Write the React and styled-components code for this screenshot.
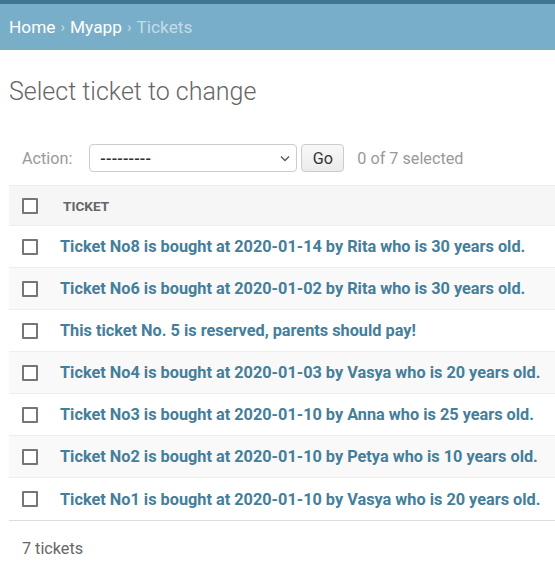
import React from "react";
import styled, { createGlobalStyle } from "styled-components";

const Global = createGlobalStyle`
  html, body { margin: 0; padding: 0; background: #fff; }
  body { font-family: Roboto, "Liberation Sans", Arial, sans-serif; color: #333; overflow: hidden; }
  * { box-sizing: border-box; }
`;

const TopStrip = styled.div`
  height: 4px;
  background: #417690;
`;

const Breadcrumbs = styled.div`
  height: 46px;
  background: #79aec8;
  padding: 0 9px;
  display: flex;
  align-items: center;
  font-size: 17.3px;
  color: #c4dce8;
`;

const Crumb = styled.a`
  color: #fff;
  text-decoration: none;
`;

const Sep = styled.span`
  color: #c4dce8;
  margin: 0 5px;
  font-size: 15px;
`;

const Content = styled.div`
  padding: 28px 0 0 9px;
`;

const Title = styled.h1`
  margin: 0 0 38px;
  font-size: 25px;
  font-weight: 300;
  color: #666;
  line-height: 28px;
`;

const Actions = styled.div`
  display: flex;
  align-items: center;
  height: 28px;
  padding-left: 13px;
  margin-bottom: 13px;
  font-size: 16.2px;
  color: #999;
`;

const Label = styled.span`
  color: #999;
  margin-right: 17px;
`;

const SelectBox = styled.div`
  position: relative;
  width: 208px;
  height: 28px;
  border: 1px solid #ccc;
  border-radius: 4px;
  background: #fff;
  display: flex;
  align-items: center;
  padding-left: 10px;
  font-size: 16px;
  font-weight: 500;
  color: #333;
  letter-spacing: 0.2px;
`;

const Chevron = styled.svg`
  position: absolute;
  right: 6px;
  top: 10px;
`;

const GoButton = styled.button`
  margin-left: 4px;
  height: 28px;
  width: 43px;
  border: 1px solid #ccc;
  border-radius: 4px;
  background: linear-gradient(#f8f8f8, #ebebeb);
  font-family: inherit;
  font-size: 16.2px;
  color: #333;
  padding: 0;
`;

const Counter = styled.span`
  margin-left: 13px;
  color: #999;
`;

const Table = styled.div`
  border-bottom: 1px solid #ddd;
`;

const HeaderRow = styled.div`
  display: flex;
  align-items: center;
  height: 41px;
  background: #f6f6f6;
  border-top: 1px solid #eee;
  border-bottom: 1px solid #eee;
  padding-left: 13px;
`;

const HeadCell = styled.span`
  margin-left: 25px;
  font-size: 13.6px;
  font-weight: 700;
  color: #666;
  text-transform: uppercase;
`;

const Row = styled.div`
  display: flex;
  align-items: center;
  height: 42px;
  padding-left: 13px;
  background: ${(p) => (p.$even ? "#f9f9f9" : "#fff")};
  border-bottom: ${(p) => (p.$last ? "none" : "1px solid #eee")};
`;

const Check = styled.span`
  width: 16px;
  height: 16px;
  border: 2px solid #767676;
  border-radius: 1px;
  background: #fff;
  flex: none;
`;

const Link = styled.a`
  margin-left: 22px;
  font-size: 16.3px;
  font-weight: 700;
  color: #447e9b;
  text-decoration: none;
  white-space: nowrap;
`;

const Footer = styled.div`
  padding: 18px 0 0 13px;
  font-size: 16.2px;
  color: #666;
`;

const tickets = [
  "Ticket No8 is bought at 2020-01-14 by Rita who is 30 years old.",
  "Ticket No6 is bought at 2020-01-02 by Rita who is 30 years old.",
  "This ticket No. 5 is reserved, parents should pay!",
  "Ticket No4 is bought at 2020-01-03 by Vasya who is 20 years old.",
  "Ticket No3 is bought at 2020-01-10 by Anna who is 25 years old.",
  "Ticket No2 is bought at 2020-01-10 by Petya who is 10 years old.",
  "Ticket No1 is bought at 2020-01-10 by Vasya who is 20 years old.",
];

export default function App() {
  return (
    <>
      <Global />
      <TopStrip />
      <Breadcrumbs>
        <Crumb href="#">Home</Crumb>
        <Sep>›</Sep>
        <Crumb href="#">Myapp</Crumb>
        <Sep>›</Sep>
        <span>Tickets</span>
      </Breadcrumbs>
      <Content>
        <Title>Select ticket to change</Title>
        <Actions>
          <Label>Action:</Label>
          <SelectBox>
            ---------
            <Chevron width="10" height="7" viewBox="0 0 10 7">
              <path d="M1 1.5 L5 5.5 L9 1.5" fill="none" stroke="#555" strokeWidth="1.3" />
            </Chevron>
          </SelectBox>
          <GoButton>Go</GoButton>
          <Counter>0 of 7 selected</Counter>
        </Actions>
        <Table>
          <HeaderRow>
            <Check />
            <HeadCell>Ticket</HeadCell>
          </HeaderRow>
          {tickets.map((t, i) => (
            <Row key={i} $even={i % 2 === 1} $last={i === tickets.length - 1}>
              <Check />
              <Link href="#">{t}</Link>
            </Row>
          ))}
        </Table>
        <Footer>7 tickets</Footer>
      </Content>
    </>
  );
}
